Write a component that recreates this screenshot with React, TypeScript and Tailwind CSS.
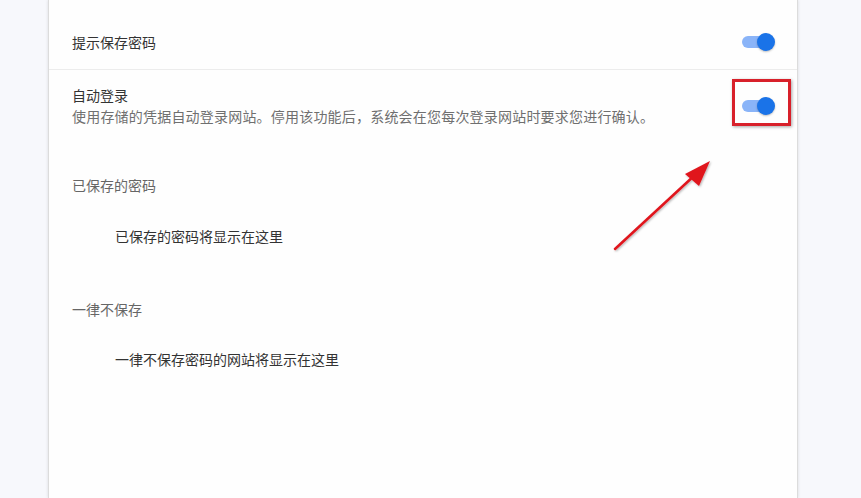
import React from "react";

const Toggle = () => (
  <div className="relative w-[34px] h-[18px] flex items-center">
    <div className="w-[30px] h-[12px] rounded-full bg-[#8ab4f8] ml-[1px]" />
    <div className="absolute right-0 top-0 w-[18px] h-[18px] rounded-full bg-[#1a73e8] shadow-[0_1px_2px_rgba(0,0,0,0.25)]" />
  </div>
);

export default function App() {
  const font = { fontFamily: '"Noto Sans CJK SC", "Noto Sans", sans-serif' };
  return (
    <div className="w-[861px] h-[498px] bg-[#f7f8fc] flex overflow-hidden relative" style={font}>
      <div className="ml-[48px] w-[750px] h-[498px] bg-[#fefefe] border-l border-r border-[#dcdcdc] shadow-[0_0_3px_rgba(0,0,0,0.12)] flex flex-col">
        <div className="h-[70px] flex items-end pb-[18px] pl-[23px] pr-[22px] justify-between border-b border-[#ececec]">
          <span className="text-[14px] leading-[18px] text-[#333]">提示保存密码</span>
          <div className="mb-[0px]"><Toggle /></div>
        </div>
        <div className="flex justify-between pl-[23px] pr-[22px] pt-[15px]">
          <div className="flex flex-col">
            <span className="text-[14px] leading-[20px] text-[#333]">自动登录</span>
            <span className="text-[14px] leading-[22px] text-[#6f6f6f] tracking-[0.2px]">使用存储的凭据自动登录网站。停用该功能后，系统会在您每次登录网站时要求您进行确认。</span>
          </div>
          <div className="relative mt-[12px]">
            <Toggle />
            <div className="absolute left-[-9px] top-[-18px] w-[59px] h-[47px] border-[3px] border-[#d8202a] shadow-[1px_1px_3px_rgba(0,0,0,0.35)]" />
          </div>
        </div>
        <div className="pl-[23px] mt-[48px] text-[14px] leading-[20px] text-[#666]">已保存的密码</div>
        <div className="pl-[66px] mt-[31px] text-[14px] leading-[20px] text-[#333]">已保存的密码将显示在这里</div>
        <div className="pl-[23px] mt-[53px] text-[14px] leading-[20px] text-[#666]">一律不保存</div>
        <div className="pl-[66px] mt-[30px] text-[14px] leading-[20px] text-[#333]">一律不保存密码的网站将显示在这里</div>
      </div>
      <svg className="absolute left-0 top-0" width="861" height="498" viewBox="0 0 861 498">
        <defs>
          <filter id="sh" x="-20%" y="-20%" width="140%" height="140%">
            <feDropShadow dx="1" dy="1" stdDeviation="1" floodColor="#000" floodOpacity="0.3" />
          </filter>
        </defs>
        <g filter="url(#sh)">
          <line x1="615" y1="249" x2="696" y2="174" stroke="#e0141e" strokeWidth="2.5" strokeLinecap="round" />
          <polygon points="710,161 685,174 699,186" fill="#e0141e" />
        </g>
      </svg>
    </div>
  );
}
